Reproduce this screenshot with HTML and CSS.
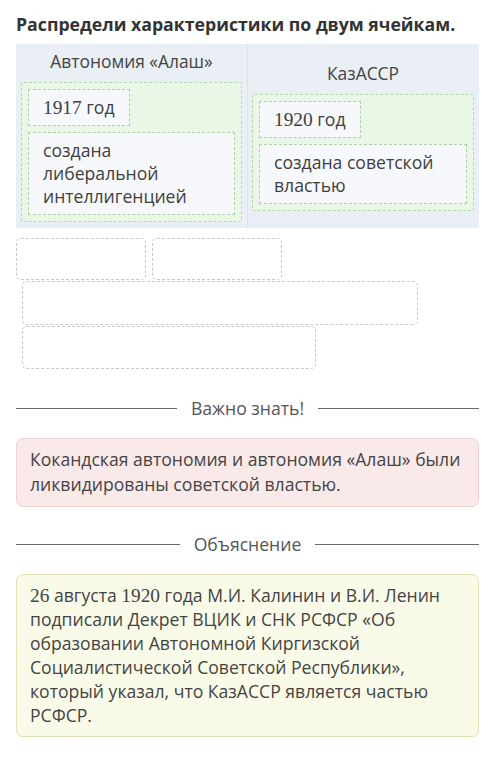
FILE: index.html
```html
<!DOCTYPE html>
<html lang="ru">
<head>
<meta charset="utf-8">
<title>Распредели характеристики</title>
<link rel="stylesheet" href="styles.css">
</head>
<body>
<div class="page">
  <h1 class="title">Распредели характеристики по двум ячейкам.</h1>

  <div class="table">
    <div class="col">
      <div class="col-head">Автономия «Алаш»</div>
      <div class="zone">
        <div class="item"><span class="num">1917</span> год</div>
        <div class="item">создана либеральной интеллигенцией</div>
      </div>
    </div>
    <div class="col">
      <div class="col-head">КазАССР</div>
      <div class="zone">
        <div class="item"><span class="num">1920</span> год</div>
        <div class="item">создана советской властью</div>
      </div>
    </div>
  </div>

  <div class="slots">
    <div class="slot slot-s"></div>
    <div class="slot slot-s"></div>
    <div class="slot slot-l"></div>
    <div class="slot slot-m"></div>
  </div>

  <div class="divider"><span class="divider-text">Важно знать!</span></div>
  <div class="note note-pink">Кокандская автономия и автономия «Алаш» были ликвидированы советской властью.</div>

  <div class="divider divider-2"><span class="divider-text">Объяснение</span></div>
  <div class="note note-yellow"><span class="num">26</span> августа <span class="num">1920</span> года М.И. Калинин и В.И. Ленин подписали Декрет ВЦИК и СНК РСФСР «Об образовании Автономной Киргизской Социалистической Советской Республики», который указал, что КазАССР является частью РСФСР.</div>
</div>
</body>
</html>
```

FILE: styles.css
```css
* { box-sizing: border-box; }
html, body { margin: 0; padding: 0; background: #fff; }
body {
  font-family: "Open Sans", "Noto Sans", sans-serif;
  color: #3c3c3c;
}
.page {
  width: 463px;
  margin-left: 16px;
}
.title {
  margin: 0;
  padding-top: 11px;
  font-size: 17.7px;
  line-height: 26px;
  font-weight: 700;
  color: #333;
  height: 44px;
  white-space: nowrap;
}
.num {
  font-family: "Liberation Serif", "DejaVu Serif", serif;
  font-size: 1.1em;
  line-height: 1;
}
.table {
  display: grid;
  grid-template-columns: 231px 232px;
  align-items: stretch;
  background: #e9eff4;
}
.col {
  padding: 5px 5px 6px;
  display: flex;
  flex-direction: column;
  justify-content: center;
}
.col + .col { border-left: 1px solid #dde4ea; padding-left: 4px; }
.col-head {
  text-align: center;
  font-size: 17.4px;
  line-height: 24px;
  color: #444;
  margin-bottom: 9px;
}
.zone {
  background: #eaf6e6;
  border: 1px dashed #b3d9aa;
  border-radius: 3px;
  padding: 6px;
  display: flex;
  flex-wrap: wrap;
  align-items: flex-start;
  gap: 6px;
}
.item {
  max-width: 100%;
  background: #f6f8fb;
  border: 1px dashed #a9d3a0;
  padding: 6px 14px 6px 14px;
  font-size: 17.6px;
  line-height: 23px;
  color: #404040;
}
.slots {
  margin-top: 10px;
  display: flex;
  flex-wrap: wrap;
  column-gap: 6px;
  row-gap: 1px;
}
.slot {
  height: 43px;
  border: 1px dashed #c9c9c9;
  border-radius: 5px;
  background: #fff;
}
.slot-s { width: 130px; height: 42px; }
.slot-l { width: 396px; margin-left: 6px; height: 44px; }
.slot-m { width: 294px; margin-left: 6px; }
.divider {
  margin-top: 28px;
  display: flex;
  align-items: center;
  gap: 14px;
  font-size: 17.6px;
  line-height: 22px;
  color: #555;
}
.divider::before, .divider::after {
  content: "";
  flex: 1;
  height: 1px;
  background: #6a6a6a;
}
.divider-2 { margin-top: 26px; }
.note {
  margin-top: 19px;
  border-radius: 7px;
  font-size: 17.6px;
  color: #444;
}
.note-pink {
  background: #f9e9e9;
  border: 1px solid #efd3d3;
  padding: 8px 13px 9px 13px;
  line-height: 25px;
}
.note-yellow {
  margin-top: 19px;
  background: #fafae8;
  border: 1px solid #e2e0b4;
  padding: 8px 13px 9px 13px;
  line-height: 24px;
}
```
